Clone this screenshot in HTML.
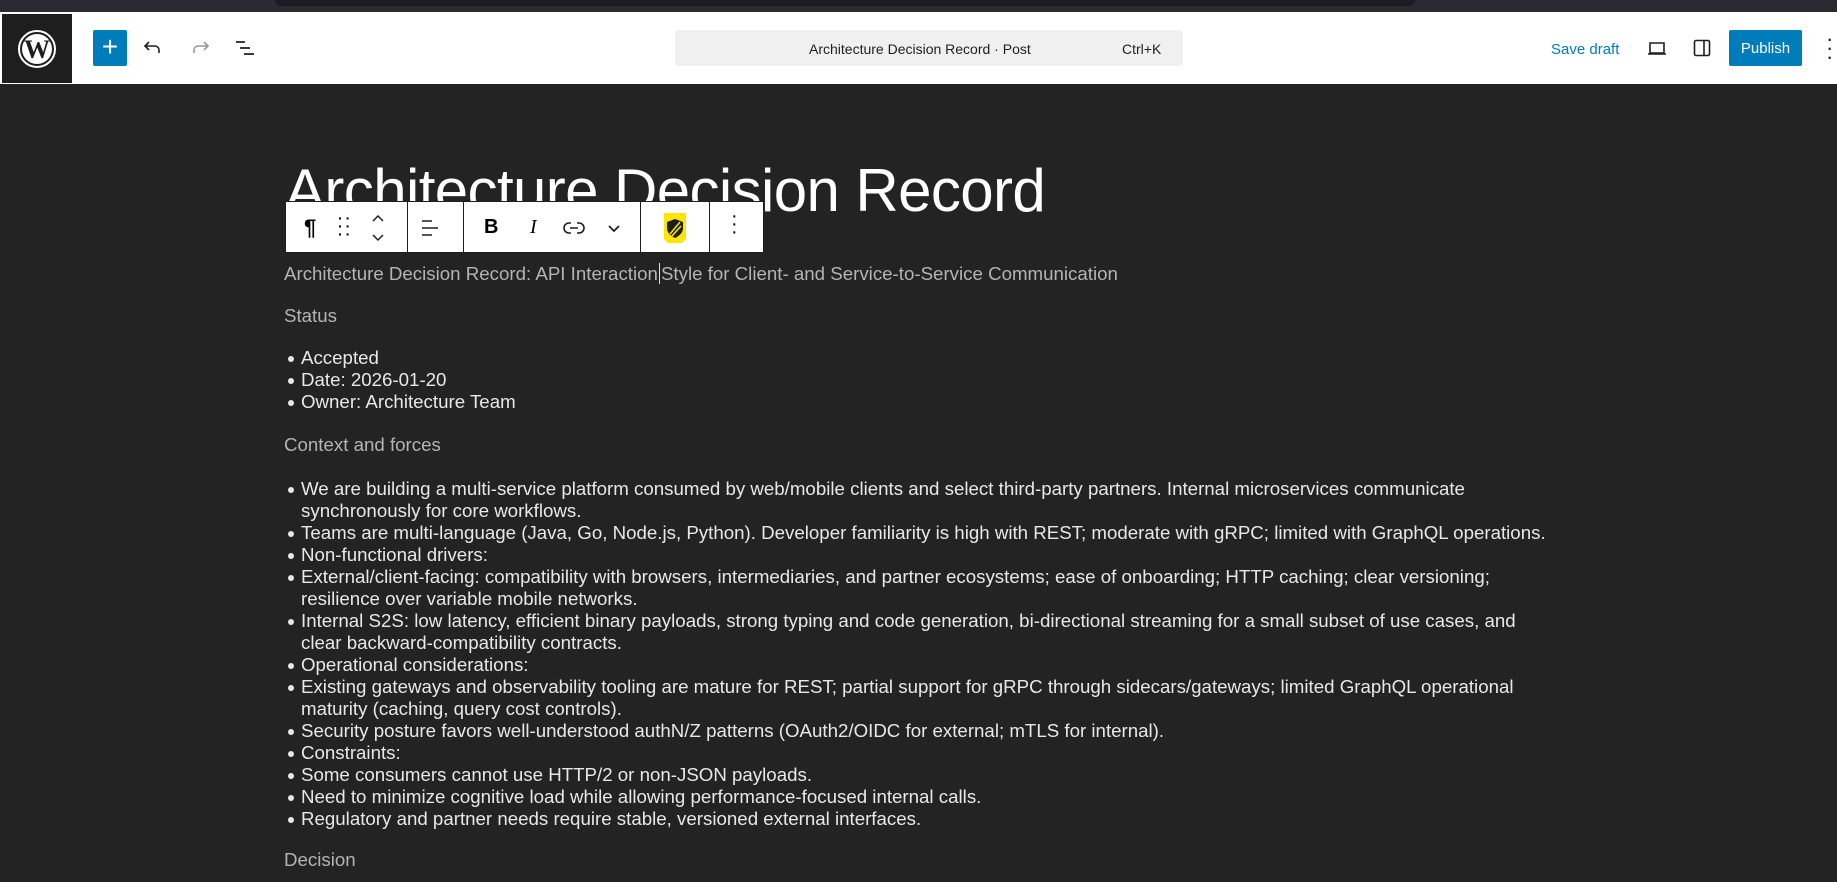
<!DOCTYPE html>
<html><head><meta charset="utf-8"><style>
*{margin:0;padding:0;box-sizing:border-box}
body{width:1837px;height:882px;overflow:hidden;background:#232323;font-family:"Liberation Sans",sans-serif;position:relative}
.top{position:absolute;left:0;top:0;width:1837px;height:12px;background:#2b2a33}
.top:before{content:"";position:absolute;left:275px;top:0;width:1140px;height:6px;background:#1c1b22;border-radius:0 0 8px 8px}
.hdr{position:absolute;left:0;top:12px;width:1837px;height:72px;background:#fff}
.logo{position:absolute;left:2px;top:2px;width:70px;height:69px;background:#1e1e1e;display:flex;align-items:center;justify-content:center}
.abs{position:absolute}
.plus{left:93px;top:18px;width:34px;height:36px;background:#007cba;border-radius:2px;color:#fff;font-size:28px;line-height:34px;text-align:center}
.search{left:675px;top:18px;width:508px;height:36px;background:#f0f0f0;border-radius:3px;font-size:14px;color:#1e1e1e}
.pub{left:1729px;top:18px;width:73px;height:36px;background:#007cba;border-radius:2px;color:#fff;font-size:15px;line-height:38px;text-align:center}
.title{position:absolute;left:285px;top:156px;font-size:60px;color:#fff;white-space:nowrap;letter-spacing:-0.6px}
.tb{position:absolute;left:285px;top:201px;width:479px;height:52px;background:#fff;border:1px solid #1e1e1e}
.sep{position:absolute;top:0;width:1px;height:52px;background:#1e1e1e}
.c{position:absolute;left:284px;font-size:18.7px;color:#e8e8e8;line-height:22px;white-space:nowrap}
.g{color:#b4b4b4}
ul{list-style:none}
li{position:relative;padding-left:17px}
li:before{content:"";position:absolute;left:4px;top:9px;width:6px;height:6px;border-radius:50%;background:#e8e8e8}
</style></head><body>
<div class="top"></div>
<div class="hdr">
 <div class="logo"><svg width="40" height="40" viewBox="0 0 40 40"><circle cx="20" cy="20" r="18" fill="none" stroke="#fff" stroke-width="2"/><circle cx="20" cy="20" r="15" fill="#fff"/><text x="20" y="29" text-anchor="middle" font-family="Liberation Serif" font-weight="bold" font-size="26" fill="#1e1e1e">W</text></svg></div>
 <div class="abs plus">+</div>
 <svg class="abs" style="left:141px;top:24px" width="24" height="24" viewBox="0 0 24 24"><path d="M8 6 4 10l4 4M4 10h10a4 4 0 0 1 4 4v3" fill="none" stroke="#1e1e1e" stroke-width="1.6"/></svg>
 <svg class="abs" style="left:188px;top:24px" width="24" height="24" viewBox="0 0 24 24"><path d="M16 6l4 4-4 4M20 10H10a4 4 0 0 0-4 4v3" fill="none" stroke="#999" stroke-width="1.6"/></svg>
 <svg class="abs" style="left:233px;top:24px" width="24" height="24" viewBox="0 0 24 24"><path d="M3 6h9M7 12h10M11 18h10" fill="none" stroke="#1e1e1e" stroke-width="1.8"/></svg>
 <div class="abs search"><span class="abs" style="left:134px;top:11px">Architecture Decision Record · Post</span><span class="abs" style="left:447px;top:11px">Ctrl+K</span></div>
 <div class="abs" style="left:1551px;top:29px;font-size:15px;color:#007cba">Save draft</div>
 <svg class="abs" style="left:1645px;top:24px" width="24" height="24" viewBox="0 0 24 24"><path d="M5 7h14v10H5zM3 18h18" fill="none" stroke="#1e1e1e" stroke-width="1.6"/></svg>
 <svg class="abs" style="left:1690px;top:24px" width="24" height="24" viewBox="0 0 24 24"><rect x="4.5" y="4.5" width="15" height="15" rx="1.5" fill="none" stroke="#1e1e1e" stroke-width="1.6"/><path d="M14 5v14" stroke="#1e1e1e" stroke-width="1.6"/></svg>
 <div class="abs pub">Publish</div>
 <div class="abs" style="left:1826px;top:22px;font-size:22px;color:#1e1e1e;line-height:9px">·<br>·<br>·</div>
</div>
<div class="title">Architecture Decision Record</div>
<div class="tb">
 <span class="abs" style="left:18px;top:13px;font-size:22px;font-weight:bold">¶</span>
 <span class="abs" style="left:52px;top:12px;font-size:14px;line-height:8px;letter-spacing:3px;font-weight:bold">··<br>··<br>··</span>
 <svg class="abs" style="left:84px;top:10px" width="16" height="32" viewBox="0 0 16 32"><path d="M3 9l5-5 5 5M3 23l5 5 5-5" fill="none" stroke="#1e1e1e" stroke-width="1.5"/></svg>
 <div class="sep" style="left:121px"></div>
 <svg class="abs" style="left:132px;top:14px" width="24" height="24" viewBox="0 0 24 24"><path d="M4 5h10M4 12h16M4 19h10" stroke="#1e1e1e" stroke-width="1.6"/></svg>
 <div class="sep" style="left:177px"></div>
 <span class="abs" style="left:198px;top:14px;font-size:20px;font-weight:bold">B</span>
 <span class="abs" style="left:244px;top:14px;font-size:20px;font-style:italic;font-family:'Liberation Serif'">I</span>
 <svg class="abs" style="left:276px;top:14px" width="24" height="24" viewBox="0 0 24 24"><path d="M9 7H7a5 5 0 0 0 0 10h2M15 7h2a5 5 0 0 1 0 10h-2M8 12h8" fill="none" stroke="#1e1e1e" stroke-width="1.6"/></svg>
 <svg class="abs" style="left:320px;top:18px" width="16" height="16" viewBox="0 0 16 16"><path d="M3 6l5 5 5-5" fill="none" stroke="#1e1e1e" stroke-width="1.8"/></svg>
 <div class="sep" style="left:354px"></div>
 <svg class="abs" style="left:374px;top:8px" width="30" height="36" viewBox="0 0 30 36"><path d="M4 3h22v26l-4 4H8l-4-4z" fill="#ffe600"/><path d="M15 9l8 3v6c0 5-4 8-8 10-4-2-8-5-8-10v-6z" fill="#1e1e1e"/><path d="M10 24l10-12M12 26l9-10" stroke="#ffe600" stroke-width="1.5"/></svg>
 <div class="sep" style="left:423px"></div>
 <span class="abs" style="left:445px;top:10px;font-size:20px;line-height:8px">·<br>·<br>·</span>
</div>
<div class="c g" style="top:263px">Architecture Decision Record: API Interaction<span style="border-left:1px solid #ddd;margin:0 1px"></span>Style for Client- and Service-to-Service Communication</div>
<div class="c g" style="top:305px">Status</div>
<ul class="c" style="top:347px">
<li>Accepted</li><li>Date: 2026-01-20</li><li>Owner: Architecture Team</li></ul>
<div class="c g" style="top:434px">Context and forces</div>
<ul class="c" style="top:478px">
<li>We are building a multi-service platform consumed by web/mobile clients and select third-party partners. Internal microservices communicate<br>synchronously for core workflows.</li>
<li>Teams are multi-language (Java, Go, Node.js, Python). Developer familiarity is high with REST; moderate with gRPC; limited with GraphQL operations.</li>
<li>Non-functional drivers:</li>
<li>External/client-facing: compatibility with browsers, intermediaries, and partner ecosystems; ease of onboarding; HTTP caching; clear versioning;<br>resilience over variable mobile networks.</li>
<li>Internal S2S: low latency, efficient binary payloads, strong typing and code generation, bi-directional streaming for a small subset of use cases, and<br>clear backward-compatibility contracts.</li>
<li>Operational considerations:</li>
<li>Existing gateways and observability tooling are mature for REST; partial support for gRPC through sidecars/gateways; limited GraphQL operational<br>maturity (caching, query cost controls).</li>
<li>Security posture favors well-understood authN/Z patterns (OAuth2/OIDC for external; mTLS for internal).</li>
<li>Constraints:</li>
<li>Some consumers cannot use HTTP/2 or non-JSON payloads.</li>
<li>Need to minimize cognitive load while allowing performance-focused internal calls.</li>
<li>Regulatory and partner needs require stable, versioned external interfaces.</li>
</ul>
<div class="c g" style="top:849px">Decision</div>
</body></html>
